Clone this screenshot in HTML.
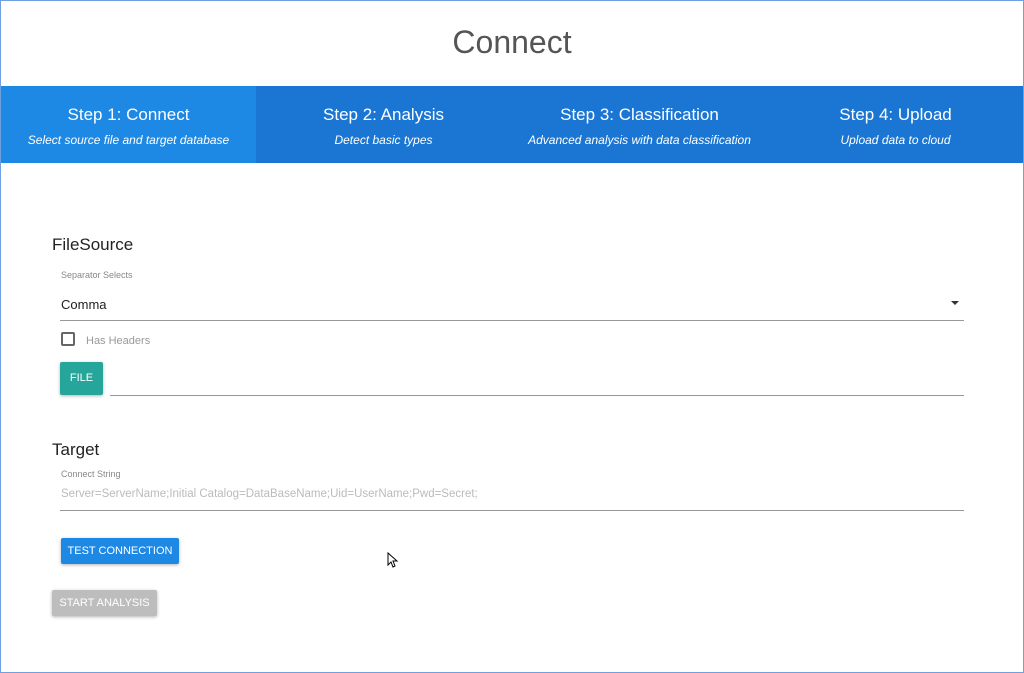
<!DOCTYPE html>
<html><head><meta charset="utf-8"><style>
*{margin:0;padding:0;box-sizing:border-box}
body{width:1024px;height:673px;background:#fff;font-family:"Liberation Sans",sans-serif;position:relative;overflow:hidden}
.frame{position:absolute;left:0;top:0;width:1024px;height:673px;border:1px solid #6fa0e0}
.abs{position:absolute}
h1{position:absolute;top:24px;left:0;width:1024px;text-align:center;font-weight:normal;font-size:32px;color:#555}
.band{position:absolute;left:1px;top:86px;width:1022px;height:77px;background:#1a76d2}
.tab{position:absolute;top:0;height:77px;color:#fff;text-align:center}
.tab .t{margin-top:19px;font-size:17px}
.tab .s{margin-top:8px;font-size:12px;font-style:italic}
.line{position:absolute;height:1px;background:#999}
.btn{position:absolute;color:#fff;font-size:11px;text-align:center;border-radius:2px;box-shadow:0 1px 3px rgba(0,0,0,.3)}
</style></head><body>
<div class="frame"></div>
<h1>Connect</h1>
<div class="band">
<div class="tab" style="left:0;width:255px;background:#1e88e5"><div class="t">Step 1: Connect</div><div class="s">Select source file and target database</div></div>
<div class="tab" style="left:255px;width:255px"><div class="t">Step 2: Analysis</div><div class="s">Detect basic types</div></div>
<div class="tab" style="left:510px;width:257px"><div class="t">Step 3: Classification</div><div class="s">Advanced analysis with data classification</div></div>
<div class="tab" style="left:767px;width:255px"><div class="t">Step 4: Upload</div><div class="s">Upload data to cloud</div></div>
</div>
<div class="abs" style="left:52px;top:235px;font-size:17px;color:#222">FileSource</div>
<div class="abs" style="left:61px;top:270px;font-size:9px;color:#888">Separator Selects</div>
<div class="abs" style="left:61px;top:297px;font-size:13px;color:#222">Comma</div>
<div class="abs" style="left:951px;top:301px;width:0;height:0;border-left:4px solid transparent;border-right:4px solid transparent;border-top:4px solid #333"></div>
<div class="line" style="left:60px;top:320px;width:904px"></div>
<div class="abs" style="left:61px;top:332px;width:14px;height:14px;border:2px solid #666;border-radius:2px"></div>
<div class="abs" style="left:86px;top:335px;font-size:11px;color:#999">Has Headers</div>
<div class="btn" style="left:60px;top:362px;width:43px;height:33px;line-height:33px;background:#26a69a">FILE</div>
<div class="line" style="left:110px;top:395px;width:854px"></div>
<div class="abs" style="left:52px;top:440px;font-size:17px;color:#222">Target</div>
<div class="abs" style="left:61px;top:469px;font-size:9px;color:#888">Connect String</div>
<div class="abs" style="left:61px;top:488px;font-size:11.5px;color:#bbb">Server=ServerName;Initial Catalog=DataBaseName;Uid=UserName;Pwd=Secret;</div>
<div class="line" style="left:60px;top:510px;width:904px"></div>
<div class="btn" style="left:61px;top:538px;width:118px;height:26px;line-height:26px;background:#1e88e5">TEST CONNECTION</div>
<div class="btn" style="left:52px;top:590px;width:105px;height:26px;line-height:26px;background:#bdbdbd">START ANALYSIS</div>
<svg class="abs" style="left:387px;top:552px" width="12" height="16" viewBox="0 0 12 16"><path d="M1 1 L1 13 L4 10 L6 15 L8 14 L6 9 L10 9 Z" fill="#fff" stroke="#000" stroke-width="1"/></svg>
</body></html>
